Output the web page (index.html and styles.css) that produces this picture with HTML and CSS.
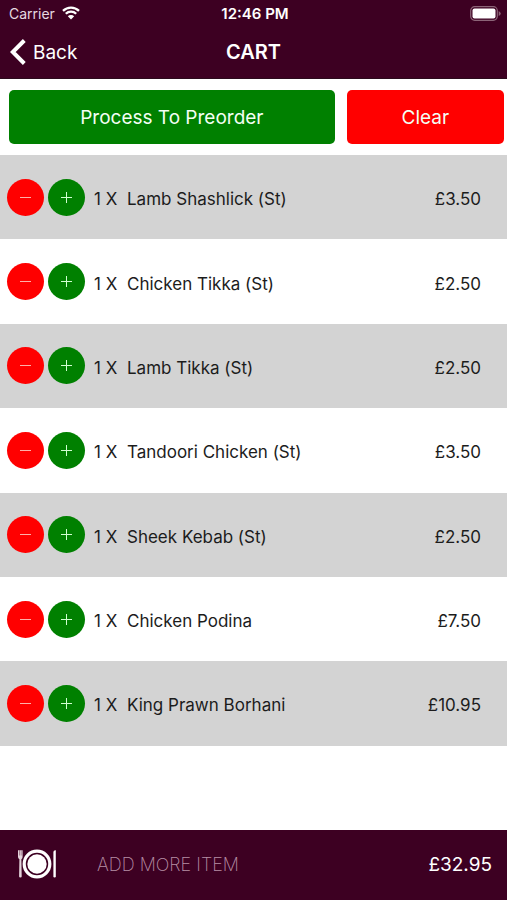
FILE: index.html
```html
<!DOCTYPE html>
<html lang="en">
<head>
<meta charset="utf-8">
<meta name="viewport" content="width=device-width, initial-scale=1">
<title>Cart</title>
<link rel="stylesheet" href="styles.css">
</head>
<body>
<div class="app">
  <header class="header">
    <div class="status">
      <span class="carrier">Carrier
        <svg class="wifi" viewBox="0 0 18 14" aria-hidden="true"><path d="M1 4.800a11.500 11.500 0 0 1 16 0M3.800 7.800a7.400 7.400 0 0 1 10.400 0" fill="none" stroke="currentColor" stroke-width="2.300"/><path d="M9 13.500 5.800 10.300a4.600 4.600 0 0 1 6.400 0z" fill="currentColor"/></svg>
      </span>
      <time class="time">12:46 PM</time>
      <svg class="battery" viewBox="0 0 31 15" aria-hidden="true"><rect x=".7" y=".7" width="26.600" height="13.600" rx="4" fill="none" stroke="#8c6478" stroke-width="1.200"/><rect x="2.500" y="2.500" width="23" height="10" rx="2" fill="#fff"/><path d="M28.700 5v5q2-1 2-2.500t-2-2.500z" fill="#8c6478"/></svg>
    </div>
    <nav class="nav">
      <a class="back" href="#"><svg class="chevron" viewBox="0 0 16 26" aria-hidden="true"><path d="M14.300 1.500 2.800 13l11.500 11.500" fill="none" stroke="currentColor" stroke-width="4"/></svg>Back</a>
      <h1 class="title">CART</h1>
    </nav>
  </header>
  <div class="actions">
    <button class="action process" type="button">Process To Preorder</button>
    <button class="action clear" type="button">Clear</button>
  </div>
  <ul class="items">
    <li class="item"><button class="step minus" type="button" aria-label="Remove one"></button><button class="step plus" type="button" aria-label="Add one"></button><span class="qty">1 X</span><span class="name">Lamb Shashlick (St)</span><span class="price">£3.50</span></li>
    <li class="item"><button class="step minus" type="button" aria-label="Remove one"></button><button class="step plus" type="button" aria-label="Add one"></button><span class="qty">1 X</span><span class="name">Chicken Tikka (St)</span><span class="price">£2.50</span></li>
    <li class="item"><button class="step minus" type="button" aria-label="Remove one"></button><button class="step plus" type="button" aria-label="Add one"></button><span class="qty">1 X</span><span class="name">Lamb Tikka (St)</span><span class="price">£2.50</span></li>
    <li class="item"><button class="step minus" type="button" aria-label="Remove one"></button><button class="step plus" type="button" aria-label="Add one"></button><span class="qty">1 X</span><span class="name">Tandoori Chicken (St)</span><span class="price">£3.50</span></li>
    <li class="item"><button class="step minus" type="button" aria-label="Remove one"></button><button class="step plus" type="button" aria-label="Add one"></button><span class="qty">1 X</span><span class="name">Sheek Kebab (St)</span><span class="price">£2.50</span></li>
    <li class="item"><button class="step minus" type="button" aria-label="Remove one"></button><button class="step plus" type="button" aria-label="Add one"></button><span class="qty">1 X</span><span class="name">Chicken Podina</span><span class="price">£7.50</span></li>
    <li class="item"><button class="step minus" type="button" aria-label="Remove one"></button><button class="step plus" type="button" aria-label="Add one"></button><span class="qty">1 X</span><span class="name">King Prawn Borhani</span><span class="price">£10.95</span></li>
  </ul>
  <footer class="footer">
    <a class="more" href="#">
      <svg class="plate" viewBox="0 0 40 30" aria-hidden="true"><circle cx="20" cy="15" r="12.800" fill="none" stroke="#fff" stroke-width="3.200"/><circle cx="20" cy="15" r="9.700" fill="#fff"/><path d="M1 1.200h4.600V8q0 1.500-1.200 2.300L4.700 27.500q0 1-1.300 1t-1.300-1L2.400 10.300Q1 9.500 1 8z" fill="#e3d3db"/><path d="M2.500 1v5.500M4.200 1v5.500" stroke="#7d4d66" stroke-width=".6"/><path d="M36.400 3q0-2 2.400-1.800v26q0 1.300-1.200 1.300t-1.200-1.300z" fill="#fff"/></svg>
      <span>ADD MORE ITEM</span>
    </a>
    <span class="total">£32.95</span>
  </footer>
</div>
</body>
</html>
```
FILE: styles.css
```css
* { box-sizing: border-box; }

body {
  margin: 0;
  background: #fff;
  color: #1c1c1c;
  font-family: Inter, "Liberation Sans", sans-serif;
}

button { border: 0; padding: 0; font: inherit; cursor: pointer; }
a { color: inherit; text-decoration: none; }
svg { display: block; }

.app { display: flex; flex-direction: column; min-height: 100vh; }

.header {
  background: #3d0022;
  color: #fff;
  border-bottom: 1px solid #2b0a1c;
}

.status {
  display: grid;
  grid-template-columns: 1fr auto 1fr;
  align-items: center;
  height: 26px;
  padding: 0 6px 0 9px;
  font-size: 14px;
}
.carrier { display: flex; align-items: center; gap: 7px; color: #e6d9e0; }
.wifi { width: 18px; height: 14px; color: #fff; }
.time { font-size: 15px; font-weight: 600; }
.battery { width: 31px; height: 15px; justify-self: end; }

.nav {
  display: grid;
  grid-template-columns: 1fr auto 1fr;
  align-items: center;
  height: 52px;
  padding: 0 10px;
}
.back { display: flex; align-items: center; gap: 7px; font-size: 19px; }
.chevron { width: 16px; height: 26px; }
.title { margin: 0; font-size: 20px; font-weight: 600; }

.actions {
  display: grid;
  grid-template-columns: 325fr 157fr;
  gap: 12px;
  height: 76px;
  padding: 11px 3px 11px 9px;
}
.action { border-radius: 5px; color: #f4fff4; font-size: 19px; }
.process { background: #008000; }
.clear { background: #f00; }

.items {
  flex: 1;
  display: grid;
  grid-template-rows: repeat(8, minmax(80px, 1fr));
  margin: 0;
  padding: 0;
  list-style: none;
  font-size: 17px;
}
.item {
  display: flex;
  align-items: center;
  padding: 4px 26px 0 7px;
}
.item:nth-child(odd) { background: #d3d3d3; }

.step {
  position: relative;
  flex: none;
  width: 37px;
  height: 37px;
  margin: 0 4px 4px 0;
  border-radius: 50%;
}
.minus { background: #f00; }
.plus { background: #008000; }
.step::before,
.plus::after {
  content: "";
  position: absolute;
  inset: 18px 13px;
  height: 1px;
  background: #ffb0a8;
}
.plus::before,
.plus::after { background: #d0ffd0; }
.plus::after { transform: rotate(90deg); }

.qty { width: 33px; margin-left: 5px; white-space: nowrap; }
.name { flex: 1; }

.footer {
  display: flex;
  align-items: center;
  justify-content: space-between;
  height: 70px;
  padding: 0 15px 2px 17px;
  background: #3d0022;
  color: #fff;
  font-size: 19px;
}
.more { display: flex; align-items: center; gap: 40px; color: #b78fa5; font-size: 18px; font-weight: 200; }
.plate { width: 40px; height: 30px; }
```
